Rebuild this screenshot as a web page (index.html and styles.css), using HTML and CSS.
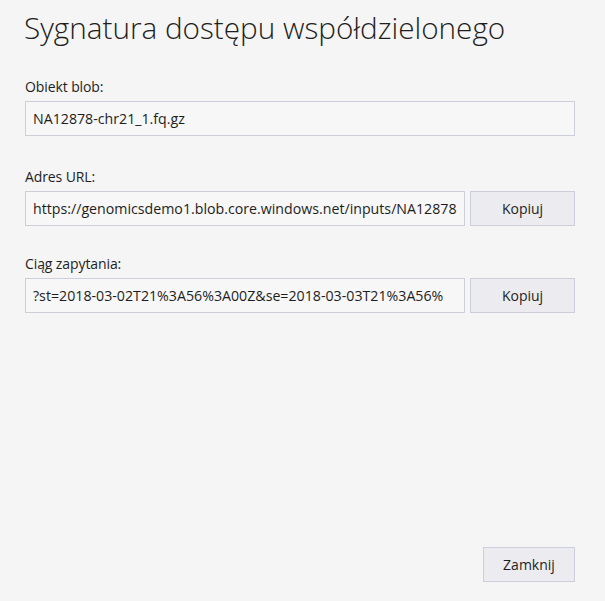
FILE: index.html
```html
<!DOCTYPE html>
<html lang="pl">
<head>
<meta charset="utf-8">
<title>Sygnatura dostępu współdzielonego</title>
<link rel="stylesheet" href="styles.css">
</head>
<body>
<div class="dialog">
  <h1 class="title">Sygnatura dostępu współdzielonego</h1>
  <div class="field">
    <label class="label">Obiekt blob:</label>
    <div class="row">
      <div class="input">NA12878-chr21_1.fq.gz</div>
    </div>
  </div>
  <div class="field">
    <label class="label">Adres URL:</label>
    <div class="row">
      <div class="input">https://genomicsdemo1.blob.core.windows.net/inputs/NA12878</div>
      <button class="btn">Kopiuj</button>
    </div>
  </div>
  <div class="field field-last">
    <label class="label">Ciąg zapytania:</label>
    <div class="row">
      <div class="input">?st=2018-03-02T21%3A56%3A00Z&amp;se=2018-03-03T21%3A56%</div>
      <button class="btn">Kopiuj</button>
    </div>
  </div>
  <div class="footer">
    <button class="btn btn-close">Zamknij</button>
  </div>
</div>
</body>
</html>
```

FILE: styles.css
```css
html, body {
  margin: 0;
  padding: 0;
  height: 100%;
  background: #f5f5f5;
}
body {
  font-family: "Open Sans", "Noto Sans", "Liberation Sans", sans-serif;
  color: #1e1e1e;
}
.dialog {
  box-sizing: border-box;
  height: 100vh;
  display: flex;
  flex-direction: column;
  padding: 0 30px 19px 25px;
}
.title {
  margin: 6px 0 0 -1px;
  font-size: 29.7px;
  font-weight: 300;
  line-height: 44px;
  color: #1e1e1e;
}
.field {
  display: flex;
  flex-direction: column;
}
.field + .field { margin-top: 31px; }
.field + .field-last { margin-top: 28px; }
.title + .field { margin-top: 27px; }
.label {
  font-size: 14px;
  line-height: 20px;
  margin-bottom: 4px;
  color: #1e1e1e;
  letter-spacing: -0.1px;
}
.row {
  display: flex;
  gap: 5px;
}
.input {
  flex: 1;
  min-width: 0;
  box-sizing: border-box;
  height: 35px;
  border: 1px solid #cccedb;
  background: #f7f7f7;
  font-size: 14.2px;
  line-height: 33px;
  padding: 0 7px;
  white-space: nowrap;
  overflow: hidden;
  color: #1e1e1e;
}
.btn {
  box-sizing: border-box;
  width: 105px;
  height: 35px;
  border: 1px solid #cccedb;
  background: #ececf0;
  font-family: inherit;
  font-size: 14px;
  color: #1e1e1e;
  padding: 0;
}
.footer {
  margin-top: auto;
  display: flex;
  justify-content: flex-end;
}
.btn-close {
  width: 92px;
}
```
